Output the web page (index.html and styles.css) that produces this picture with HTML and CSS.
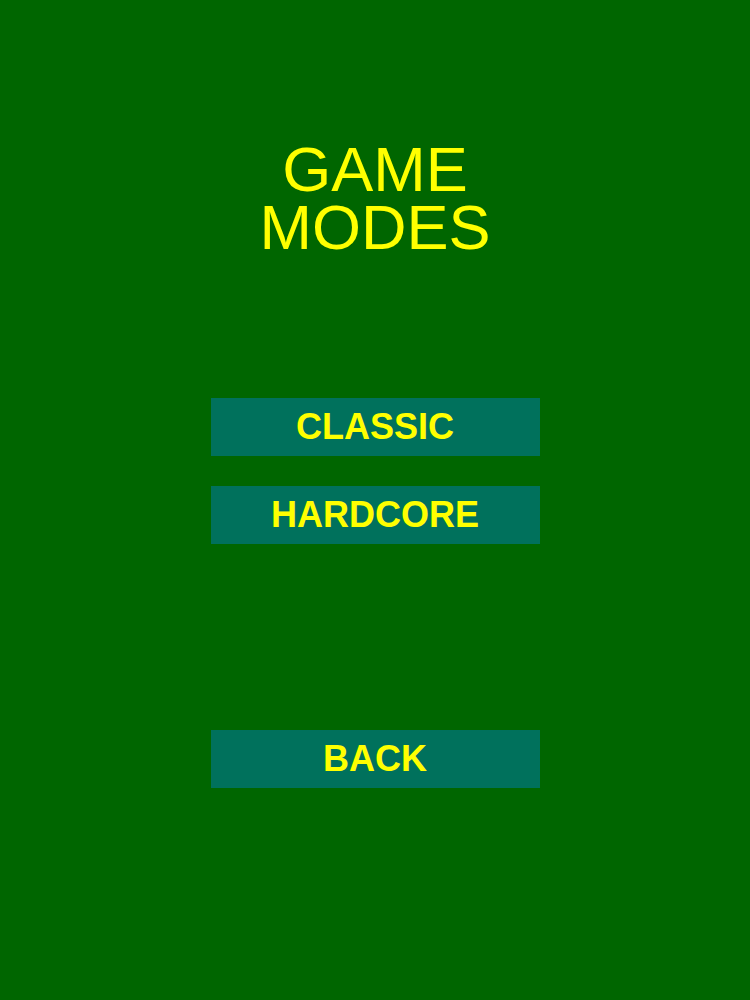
FILE: index.html
```html
<!DOCTYPE html>
<html>
<head>
<meta charset="utf-8">
<link rel="stylesheet" href="styles.css">
</head>
<body>
<main class="screen">
  <h1 class="title">GAME<br>MODES</h1>
  <div class="modes">
    <button class="btn">CLASSIC</button>
    <button class="btn">HARDCORE</button>
  </div>
  <button class="btn back">BACK</button>
</main>
</body>
</html>
```
FILE: styles.css
```css
html, body {
  margin: 0;
  padding: 0;
  background: #006600;
}
.screen {
  width: 750px;
  height: 1000px;
  display: flex;
  flex-direction: column;
  align-items: center;
  font-family: "Liberation Sans", Arial, sans-serif;
  color: #ffff00;
}
.title {
  margin: 140px 0 0;
  font-size: 63px;
  font-weight: normal;
  line-height: 58px;
  text-align: center;
}
.modes {
  margin-top: 142px;
  display: flex;
  flex-direction: column;
  gap: 30px;
}
.btn {
  width: 329px;
  height: 58px;
  border: 0;
  padding: 0;
  background: #00715c;
  color: #ffff00;
  font-family: "Liberation Sans", Arial, sans-serif;
  font-weight: bold;
  font-size: 36px;
}
.back {
  margin-top: 186px;
}
```
